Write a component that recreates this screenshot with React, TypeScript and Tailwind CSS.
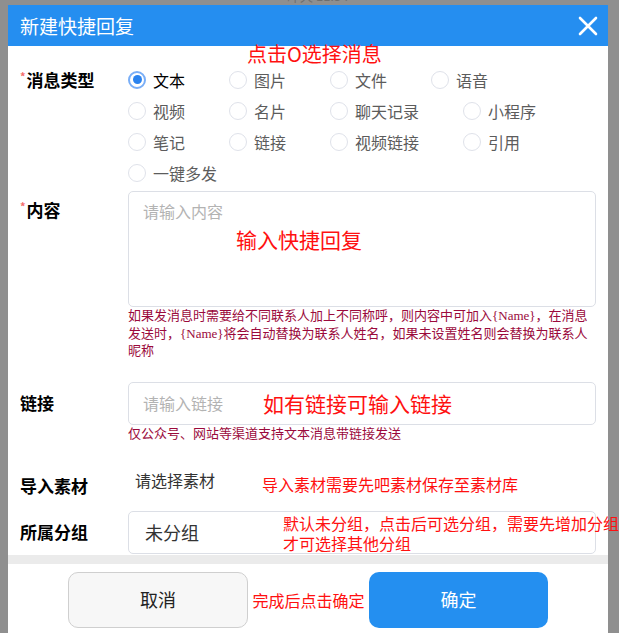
import { useState } from 'react';

const types = [
  '文本', '图片', '文件', '语音',
  '视频', '名片', '聊天记录', '小程序',
  '笔记', '链接', '视频链接', '引用',
  '一键多发',
];

const cjk = "font-['Noto_Sans_CJK_SC','Noto_Sans',sans-serif]";

function Label({ text, required }: { text: string; required?: boolean }) {
  return (
    <span className="text-[17px] font-bold leading-[24px] text-black">
      {required && <span className="mr-[1px] align-top text-[11px] leading-[16px] text-[#f56c6c]">*</span>}
      {text}
    </span>
  );
}

function Radio({ label, checked, onClick }: { label: string; checked: boolean; onClick: () => void }) {
  return (
    <button onClick={onClick} className="mr-[44px] flex h-[31px] items-center gap-[7px]">
      <span
        className={
          checked
            ? 'flex h-[18px] w-[18px] items-center justify-center rounded-full border-2 border-[#79aef7]'
            : 'h-[18px] w-[18px] rounded-full border border-[#dfe2ea]'
        }
      >
        {checked && <span className="h-[9px] w-[9px] rounded-full bg-[#2b83ef]" />}
      </span>
      <span className={checked ? 'text-[16px] leading-[24px] text-black' : 'text-[16px] leading-[24px] text-[#5c5c5c]'}>
        {label}
      </span>
    </button>
  );
}

export default function App() {
  const [type, setType] = useState('文本');

  return (
    <div className={`h-[633px] w-full overflow-hidden bg-[#8f8f8f] ${cjk}`}>
      {/* page behind the overlay */}
      <div className="h-[5px] overflow-hidden">
        <div className="-mt-[12px] pl-[287px] text-[13px] leading-[16px] text-[#6e6e6e]">昨天 11:54</div>
      </div>

      <div className="relative ml-[8px] w-[600px] bg-white">
        {/* Header */}
        <div className="flex h-[41px] items-center justify-between bg-[#258ef0] pl-[12px] pr-[10px]">
          <span className="text-[19px] leading-[26px] text-white">新建快捷回复</span>
          <svg width="20" height="20" viewBox="0 0 20 20" className="text-white">
            <path d="M2 2 L18 18 M18 2 L2 18" stroke="currentColor" strokeWidth="2.6" strokeLinecap="round" />
          </svg>
        </div>
        <div className="absolute left-[239px] top-[36px] text-[20px] leading-[26px] text-[#ff1010]">点击O选择消息</div>

        {/* Body */}
        <div className="px-[12px] pb-[1px] pt-[18px]">
          {/* 消息类型 */}
          <div className="flex">
            <div className="flex h-[31px] w-[108px] shrink-0 items-center">
              <Label text="消息类型" required />
            </div>
            <div className="flex w-[468px] flex-wrap">
              {types.map((t) => (
                <Radio key={t} label={t} checked={type === t} onClick={() => setType(t)} />
              ))}
            </div>
          </div>

          {/* 内容 */}
          <div className="mt-[3px] flex">
            <div className="w-[108px] shrink-0 pt-[7px]">
              <Label text="内容" required />
            </div>
            <div className="w-[468px]">
              <div className="relative h-[116px] rounded-[5px] border border-[#dcdfe6] px-[14px] pt-[7px]">
                <span className="text-[16px] leading-[24px] text-[#b3b3b3]">请输入内容</span>
                <div className="absolute left-[107px] top-[33px] text-[21px] leading-[28px] text-[#ff1010]">输入快捷回复</div>
              </div>
              <div className="whitespace-nowrap text-[13px] leading-[16.5px] text-[#9b0a3c]">
                <div>
                  如果发消息时需要给不同联系人加上不同称呼，则内容中可加入
                  <span className="font-['Liberation_Serif',serif]">{'{Name}'}</span>，在消息
                </div>
                <div>
                  发送时，<span className="font-['Liberation_Serif',serif]">{'{Name}'}</span>
                  将会自动替换为联系人姓名，如果未设置姓名则会替换为联系人
                </div>
                <div>昵称</div>
              </div>
            </div>
          </div>

          {/* 链接 */}
          <div className="mt-[23px] flex">
            <div className="flex h-[43px] w-[108px] shrink-0 items-center">
              <Label text="链接" />
            </div>
            <div className="w-[468px]">
              <div className="flex h-[43px] items-center rounded-[5px] border border-[#dcdfe6] px-[14px]">
                <span className="text-[16px] leading-[24px] text-[#b3b3b3]">请输入链接</span>
                <span className="ml-[40px] text-[21px] leading-[28px] text-[#ff1010]">如有链接可输入链接</span>
              </div>
              <div className="text-[13px] leading-[16px] text-[#9b0a3c]">仅公众号、网站等渠道支持文本消息带链接发送</div>
            </div>
          </div>

          {/* 导入素材 */}
          <div className="mt-[27px] flex">
            <div className="w-[108px] shrink-0 pt-[6px]">
              <Label text="导入素材" />
            </div>
            <div className="flex w-[468px] items-start">
              <span className="pl-[7px] text-[16px] leading-[24px] text-[#333]">请选择素材</span>
              <span className="ml-[47px] pt-[4px] text-[16px] leading-[24px] text-[#ff1010]">导入素材需要先吧素材保存至素材库</span>
            </div>
          </div>

          {/* 所属分组 */}
          <div className="mt-[13px] flex">
            <div className="flex h-[43px] w-[108px] shrink-0 items-center">
              <Label text="所属分组" />
            </div>
            <div className="relative flex h-[43px] w-[468px] items-center rounded-[5px] border border-[#dcdfe6] px-[16px]">
              <span className="text-[18px] leading-[26px] text-[#333]">未分组</span>
              <div className="absolute left-[154px] top-[1px] whitespace-nowrap text-[16px] leading-[20px] text-[#ff1010]">
                <div>默认未分组，点击后可选分组，需要先增加分组</div>
                <div>才可选择其他分组</div>
              </div>
            </div>
          </div>
        </div>

        <div className="h-[9px] bg-[#ebebeb]" />

        {/* Footer */}
        <div className="flex h-[69px] items-start justify-center pt-[8px]">
          <button className="h-[56px] w-[180px] rounded-[10px] border border-[#cfcfcf] bg-[#f7f7f7] text-[18px] text-[#222]">
            取消
          </button>
          <div className="flex h-[56px] w-[121px] items-center justify-center text-[16px] leading-[20px] text-[#ff1010]">
            完成后点击确定
          </div>
          <button className="h-[56px] w-[179px] rounded-[10px] bg-[#248ff0] text-[18px] text-white">确定</button>
        </div>
      </div>
    </div>
  );
}
